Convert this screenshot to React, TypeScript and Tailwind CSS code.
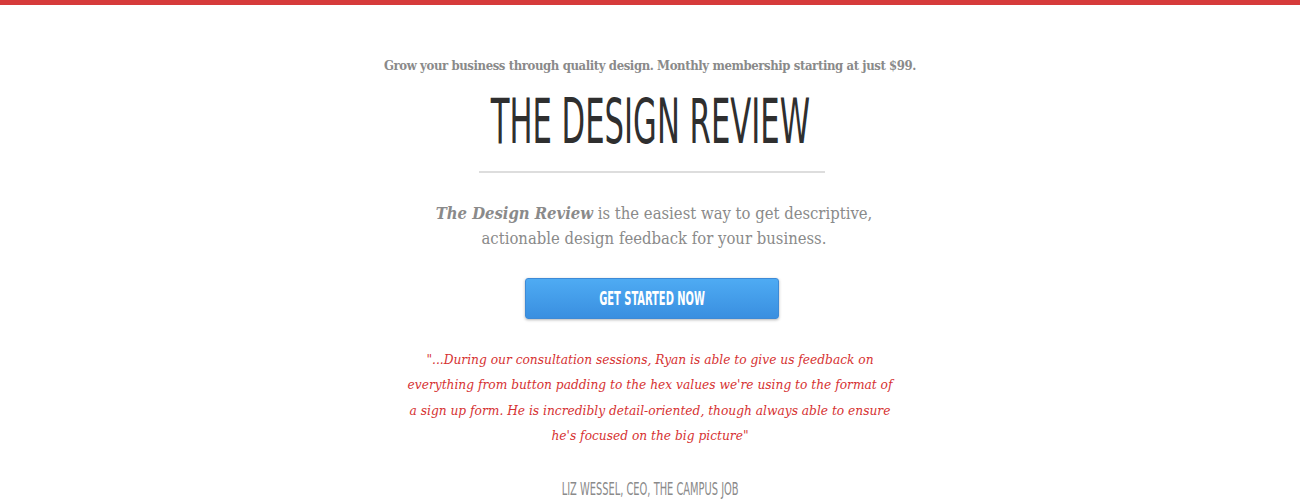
import React from "react";

const slab = "font-['DejaVu_Serif_Condensed','DejaVu_Serif',serif]";
const narrow = "font-['DejaVu_Sans_Condensed','Liberation_Sans',sans-serif]";

const App: React.FC = () => {
  return (
    <div className="min-h-[500px] bg-white overflow-hidden">
      {/* top accent bar */}
      <div className="h-[5px] bg-[#d63b3b]"></div>

      <section className="flex flex-col items-center pt-[51px]">
        <p className={`${slab} text-[13px] font-bold tracking-[-0.4px] text-[#8a8a8a]`}>
          Grow your business through quality design. Monthly membership starting at just $99.
        </p>

        <h1
          className={`${narrow} mt-[10px] text-[62px] leading-[72px] text-[#2f2f2f] inline-block scale-x-[0.55] whitespace-nowrap`}
        >
          THE DESIGN REVIEW
        </h1>

        <div className="mt-[13px] ml-[4px] w-[346px] h-[2px] bg-[#dddddd]"></div>

        <p className={`${slab} mt-[28px] ml-[8px] text-center text-[16.5px] leading-[25px] text-[#8a8a8a]`}>
          <em className="font-bold">The Design Review</em> is the easiest way to get descriptive,
          <br />
          actionable design feedback for your business.
        </p>

        <button
          className={`mt-[27px] ml-[4px] w-[254px] h-[41px] rounded-[3px] bg-gradient-to-b from-[#4eabf3] to-[#3a8fe0] border border-[#3d8ad6] shadow-[0_1px_3px_rgba(0,0,0,0.3)] flex items-center justify-center`}
        >
          <span className={`${narrow} inline-block scale-x-[0.55] whitespace-nowrap text-white text-[20px] font-bold`}>
            GET STARTED NOW
          </span>
        </button>

        <blockquote
          className={`${slab} mt-[28px] text-center italic text-[13.6px] leading-[25.5px] text-[#d63232]`}
        >
          "...During our consultation sessions, Ryan is able to give us feedback on
          <br />
          everything from button padding to the hex values we're using to the format of
          <br />
          a sign up form. He is incredibly detail-oriented, though always able to ensure
          <br />
          he's focused on the big picture"
        </blockquote>

        <p
          className={`${narrow} mt-[28px] inline-block scale-x-[0.645] whitespace-nowrap text-[17px] text-[#8a8a8a]`}
        >
          LIZ WESSEL, CEO, THE CAMPUS JOB
        </p>
      </section>
    </div>
  );
};

export default App;
